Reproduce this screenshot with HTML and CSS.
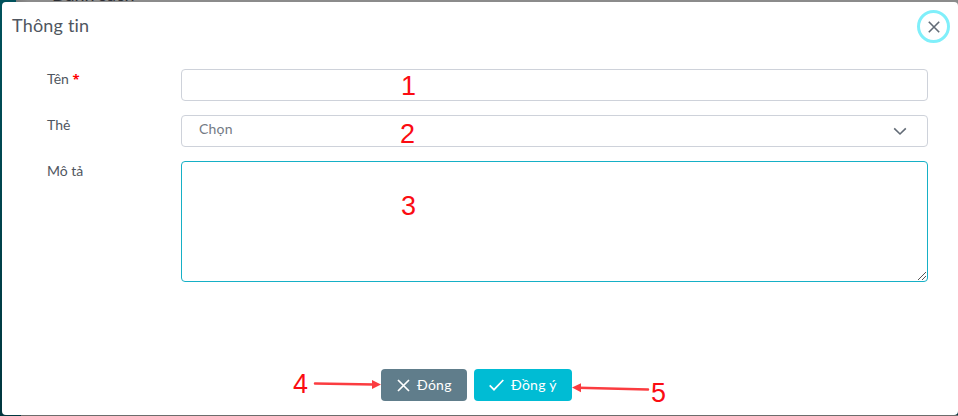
FILE: index.html
```
<!DOCTYPE html>
<html lang="vi">
<head>
<meta charset="utf-8">
<title>Thông tin</title>
<link rel="stylesheet" href="styles.css">
</head>
<body>
<div class="backdrop"><span class="page-title">Danh sách</span></div>
<main class="modal">
  <header class="modal-header">
    <h1 class="title">Thông tin</h1>
    <button class="close" type="button" aria-label="Đóng">
      <svg width="12" height="12" viewBox="0 0 12 12"><path d="M.8.800l10.400 10.400M11.200.800L.8 11.200"/></svg>
    </button>
  </header>
  <form class="form">
    <div class="row">
      <label class="label">Tên <b class="required">*</b></label>
      <div class="control"></div>
    </div>
    <div class="row">
      <label class="label">Thẻ</label>
      <div class="control select">
        <span class="placeholder">Chọn</span>
        <svg width="14" height="9" viewBox="0 0 14 9"><path d="M1.200 1.400L7 7l5.800-5.600"/></svg>
      </div>
    </div>
    <div class="row">
      <label class="label">Mô tả</label>
      <div class="control area">
        <svg width="8" height="8" viewBox="0 0 8 8"><path d="M0 8L8 0M4 8l4-4"/></svg>
      </div>
    </div>
  </form>
  <footer class="actions">
    <button class="btn secondary" type="button">
      <svg width="13" height="13" viewBox="0 0 13 13"><path d="M1 1l11 11M12 1L1 12"/></svg>
      <span class="btn-text">Đóng</span>
    </button>
    <button class="btn primary" type="button">
      <svg width="15" height="12" viewBox="0 0 15 12"><path d="M.7 6.300l4.300 4.400L14.300 1"/></svg>
      <span class="btn-text">Đồng ý</span>
    </button>
  </footer>
</main>
<span class="mark m1">1</span>
<span class="mark m2">2</span>
<span class="mark m3">3</span>
<span class="mark m4">4</span>
<span class="mark m5">5</span>
<svg class="arrows" width="958" height="416" viewBox="0 0 958 416">
  <path class="shaft" d="M315 383.600L374 384.400M578 387.700L648 389.500"/>
  <path class="head" d="M381 384.500L372 380v9zM572 387.500l9-4.300v9z"/>
</svg>
</body>
</html>
```
FILE: styles.css
```
* { box-sizing: border-box; }
body {
  margin: 0;
  width: 958px;
  height: 416px;
  overflow: hidden;
  position: relative;
  padding: 2px 0 1px 2px;
  background: linear-gradient(#00525c, #00363e);
  font-family: Lato, "Noto Sans", sans-serif;
  color: #4f5660;
}
.backdrop {
  position: absolute;
  inset: 0 0 auto 16px;
  height: 8px;
  overflow: hidden;
  background: linear-gradient(90deg, #7b7b7b, #8b8b8b 12px);
}
.page-title {
  position: absolute;
  left: 36px;
  bottom: 2px;
  font-size: 18px;
  line-height: 24px;
  color: #2b2d33;
}
body::after {
  content: "";
  position: absolute;
  left: 21px;
  right: 0;
  bottom: 0;
  height: 1px;
  background: #6c6c6c;
}
.modal {
  position: relative;
  height: 413px;
  background: #fff;
  border-radius: 4px;
  display: flex;
  flex-direction: column;
}
.modal-header {
  height: 67px;
  padding: 8px 8px 0 10px;
  display: flex;
  justify-content: space-between;
  align-items: flex-start;
}
.title {
  margin: 3px 0 0;
  font-size: 18px;
  line-height: 24px;
  font-weight: 400;
  letter-spacing: .2px;
}
.close {
  width: 33px;
  height: 33px;
  padding: 0;
  border: 3px solid #80effa;
  border-radius: 50%;
  background: #fff;
  display: flex;
  align-items: center;
  justify-content: center;
}
svg { display: block; fill: none; stroke: #626b76; stroke-width: 1.600; }
.form {
  display: flex;
  flex-direction: column;
  gap: 14px;
  padding: 0 30px 0 45px;
}
.row { display: flex; align-items: flex-start; }
.label {
  width: 134px;
  font-size: 14px;
  line-height: 20px;
}
.required {
  color: #f00;
  font: 700 13px/1 "Open Sans", sans-serif;
}
.control {
  flex: 1;
  height: 32px;
  border: 1px solid #ced2da;
  border-radius: 4px;
}
.select {
  display: flex;
  justify-content: space-between;
  padding: 3px 20px 0 17px;
}
.select svg { margin-top: 8px; }
.placeholder {
  font-size: 14px;
  line-height: 20px;
  letter-spacing: .2px;
  color: #747a84;
}
.area {
  height: 121px;
  border-color: #16b0c6;
  display: flex;
  justify-content: flex-end;
  align-items: flex-end;
  padding: 1px;
}
.area svg { stroke: #555; stroke-width: 1; }
.actions {
  margin-top: auto;
  padding: 0 0 14px 379px;
  display: flex;
  gap: 7px;
}
.btn {
  height: 32px;
  border: 0;
  border-radius: 4px;
  color: #fff;
  display: flex;
  align-items: center;
  font: 14px/20px Lato, "Noto Sans", sans-serif;
  letter-spacing: .25px;
}
.btn svg { stroke: #fff; stroke-width: 1.700; }
.secondary { width: 86px; padding: 0 0 0 16px; gap: 7px; background: #607d8b; }
.primary { width: 98px; padding: 0 0 0 15px; gap: 7px; background: #00bcd4; }
.mark {
  position: absolute;
  color: #fb0c12;
  font: 27px/30px "Liberation Sans", sans-serif;
}
.m1 { left: 401px; top: 71px; }
.m2 { left: 400px; top: 119px; }
.m3 { left: 401px; top: 191px; }
.m4 { left: 293px; top: 369px; }
.m5 { left: 651px; top: 378px; }
.arrows { position: absolute; left: 0; top: 0; }
.shaft { stroke: #fb3c40; stroke-width: 2.500; stroke-linecap: round; }
.head { fill: #fb3c40; stroke: none; }
```
